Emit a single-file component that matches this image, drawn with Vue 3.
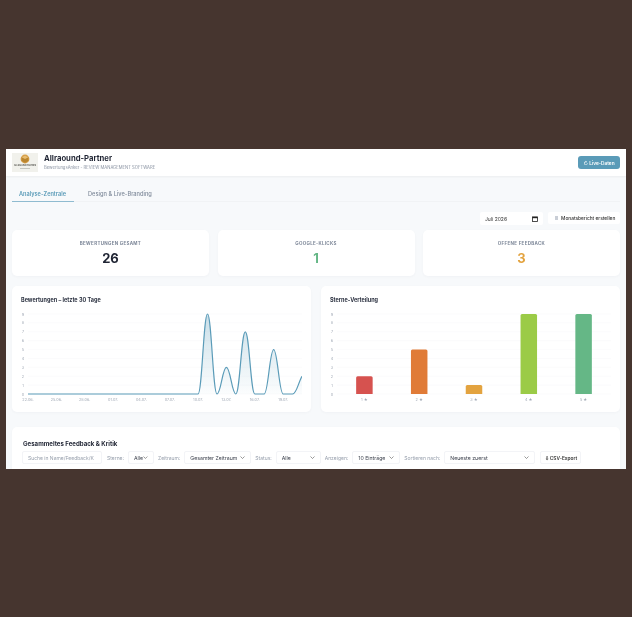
<script setup>
import { computed } from 'vue';

const stats = [
  { label: 'BEWERTUNGEN GESAMT', value: 26, color: '#1f2433' },
  { label: 'GOOGLE-KLICKS', value: 1, color: '#65b786' },
  { label: 'OFFENE FEEDBACK', value: 3, color: '#e3a33f' },
];

const days = [0, 0, 0, 0, 0, 0, 0, 0, 0, 0, 0, 0, 0, 0, 0, 0, 0, 0, 0, 9, 0, 3, 0, 7, 0, 0, 5, 0, 0, 2];
const dayLabels = ['22.06.', '25.06.', '28.06.', '01.07.', '04.07.', '07.07.', '10.07.', '13.07.', '16.07.', '19.07.'];
const stars = [
  { label: '1 ★', value: 2, color: '#d6524f' },
  { label: '2 ★', value: 5, color: '#e07b37' },
  { label: '3 ★', value: 1, color: '#e3a33f' },
  { label: '4 ★', value: 9, color: '#9bcb47' },
  { label: '5 ★', value: 9, color: '#65b786' },
];

const plot = { left: 7, right: 281, top: 5, bottom: 85 };
const ticks = [0, 1, 2, 3, 4, 5, 6, 7, 8, 9];
const yOf = (v) => plot.bottom - (v / 9) * (plot.bottom - plot.top);
const dayStep = (plot.right - plot.left) / (days.length - 1);
const xOf = (i) => plot.left + i * dayStep;

// spline with a flat tangent at every point, so peaks and valleys stay round;
// the last point has nothing after it, so the line is still rising there
const linePath = computed(() => {
  const pts = days.map((v, i) => ({ x: xOf(i), y: yOf(v) }));
  const pull = dayStep * 0.42;
  let d = `M${pts[0].x} ${pts[0].y}`;
  for (let i = 0; i < pts.length - 1; i++) {
    const a = pts[i];
    const b = pts[i + 1];
    const endY = i === pts.length - 2 ? b.y + (a.y - b.y) * 0.4 : b.y;
    d += ` C${(a.x + pull).toFixed(2)} ${a.y.toFixed(2)} ${(b.x - pull).toFixed(2)} ${endY.toFixed(2)} ${b.x.toFixed(2)} ${b.y.toFixed(2)}`;
  }
  return d;
});
const areaPath = computed(() => `${linePath.value} L${plot.right} ${plot.bottom} L${plot.left} ${plot.bottom} Z`);

const barSlot = (plot.right - plot.left) / stars.length;
const barWidth = 16.5;
const barX = (i) => plot.left + barSlot * i + (barSlot - barWidth) / 2;
</script>

<template>
  <div class="stage">
    <div class="frame">
      <header class="topbar">
        <div class="brand">
          <div class="logo">
            <svg width="26" height="19" viewBox="0 0 26 19">
              <circle cx="13" cy="6" r="4.4" fill="#d9a04a" />
              <path d="M13 2.4l3.4 1.8v3.8L13 9.8 9.6 8V4.2z" fill="#b9852f" />
              <path d="M9.6 4.2L13 6l3.4-1.8L13 2.4z" fill="#e8bd72" />
              <text x="13" y="13.2" text-anchor="middle" class="logo-text">ALLRAOUND PARTNER</text>
              <rect x="8" y="15" width="10" height="0.6" fill="#a8a8a0" />
            </svg>
          </div>
          <div class="brand-text">
            <div class="brand-name">Allraound-Partner</div>
            <div class="brand-sub">BewertungsAnker - REVIEW MANAGEMENT SOFTWARE</div>
          </div>
        </div>
        <button class="live-btn">↻ Live-Daten</button>
      </header>

      <main class="content">
        <nav class="tabs">
          <span class="tab active">Analyse-Zentrale</span>
          <span class="tab">Design &amp; Live-Branding</span>
        </nav>

        <div class="toolbar">
          <div class="month">
            <span>Juli 2026</span>
            <svg width="6" height="6" viewBox="0 0 6 6">
              <rect x="0.5" y="0.9" width="5" height="4.6" fill="none" stroke="#222" stroke-width="0.8" />
              <rect x="0.5" y="0.9" width="5" height="1.3" fill="#222" />
            </svg>
          </div>
          <button class="report-btn"><i class="doc"></i>Monatsbericht erstellen</button>
        </div>

        <section class="stats">
          <div v-for="s in stats" :key="s.label" class="card stat">
            <div class="stat-label">{{ s.label }}</div>
            <div class="stat-value" :style="{ color: s.color }">{{ s.value }}</div>
          </div>
        </section>

        <section class="charts">
          <div class="card chart">
            <h3>Bewertungen – letzte 30 Tage</h3>
            <svg width="281" height="96" viewBox="0 0 281 96">
              <defs>
                <linearGradient id="areaFill" x1="0" y1="0" x2="0" y2="1">
                  <stop offset="0" stop-color="#5a9bb8" stop-opacity="0.32" />
                  <stop offset="1" stop-color="#5a9bb8" stop-opacity="0.02" />
                </linearGradient>
              </defs>
              <line v-for="t in ticks" :key="t" :x1="plot.left" :x2="plot.right" :y1="yOf(t)" :y2="yOf(t)" class="grid" />
              <text v-for="t in ticks" :key="'y' + t" x="2" :y="yOf(t) + 1.5" class="axis" text-anchor="middle">{{ t }}</text>
              <path :d="areaPath" fill="url(#areaFill)" />
              <path :d="linePath" fill="none" stroke="#5a9bb8" stroke-width="1.2" />
              <text v-for="(l, i) in dayLabels" :key="l" :x="xOf(i * 3)" y="92" class="axis" text-anchor="middle">{{ l }}</text>
            </svg>
          </div>
          <div class="card chart">
            <h3>Sterne-Verteilung</h3>
            <svg width="281" height="96" viewBox="0 0 281 96">
              <line v-for="t in ticks" :key="t" :x1="plot.left" :x2="plot.right" :y1="yOf(t)" :y2="yOf(t)" class="grid" />
              <text v-for="t in ticks" :key="'y' + t" x="2" :y="yOf(t) + 1.5" class="axis" text-anchor="middle">{{ t }}</text>
              <g v-for="(b, i) in stars" :key="b.label">
                <path
                  :d="`M${barX(i)} ${plot.bottom}V${yOf(b.value) + 1.5}q0 -1.5 1.5 -1.5h${barWidth - 3}q1.5 0 1.5 1.5V${plot.bottom}z`"
                  :fill="b.color"
                />
                <text :x="barX(i) + barWidth / 2" y="92" class="axis" text-anchor="middle">{{ b.label }}</text>
              </g>
            </svg>
          </div>
        </section>

        <section class="card feedback">
          <h3>Gesammeltes Feedback &amp; Kritik</h3>
          <div class="filters">
            <div class="field search">Suche in Name/Feedback/K</div>
            <span class="flabel">Sterne:</span>
            <div class="field sel w-stars"><span>Alle</span><svg width="5" height="3" viewBox="0 0 5 3"><path d="M.5.5l2 2 2-2" fill="none" stroke="#555" stroke-width=".6" /></svg></div>
            <span class="flabel">Zeitraum:</span>
            <div class="field sel w-range"><span>Gesamter Zeitraum</span><svg width="5" height="3" viewBox="0 0 5 3"><path d="M.5.5l2 2 2-2" fill="none" stroke="#555" stroke-width=".6" /></svg></div>
            <span class="flabel">Status:</span>
            <div class="field sel w-status"><span>Alle</span><svg width="5" height="3" viewBox="0 0 5 3"><path d="M.5.5l2 2 2-2" fill="none" stroke="#555" stroke-width=".6" /></svg></div>
            <span class="flabel">Anzeigen:</span>
            <div class="field sel w-count"><span>10 Einträge</span><svg width="5" height="3" viewBox="0 0 5 3"><path d="M.5.5l2 2 2-2" fill="none" stroke="#555" stroke-width=".6" /></svg></div>
            <span class="flabel">Sortieren nach:</span>
            <div class="field sel w-sort"><span>Neueste zuerst</span><svg width="5" height="3" viewBox="0 0 5 3"><path d="M.5.5l2 2 2-2" fill="none" stroke="#555" stroke-width=".6" /></svg></div>
            <button class="csv">⇩ CSV-Export</button>
          </div>
        </section>
      </main>
    </div>
  </div>
</template>

<style>
html, body { margin: 0; background: #46352f; }
</style>

<style scoped>
* { box-sizing: border-box; }

.stage {
  height: 617px;
  padding: 149px 6px 0;
  background: #46352f;
  font-family: Inter, "Open Sans", sans-serif;
  color: #1f2433;
  overflow: hidden;
}

/* the source is a downscaled capture, so everything in it is slightly soft */
.frame {
  width: 620px;
  height: 320px;
  background: #f7f9fb;
  overflow: hidden;
  display: flex;
  flex-direction: column;
  filter: blur(0.3px);
}

.topbar {
  height: 27px;
  flex: none;
  background: #fff;
  padding: 0 6px;
  display: flex;
  align-items: center;
  justify-content: space-between;
  box-shadow: 0 1px 2px rgba(0, 0, 0, 0.05);
}

.brand { display: flex; align-items: center; gap: 6px; }

.logo {
  width: 26px;
  height: 19px;
  background: #f1f1ec;
  display: flex;
}

.logo-text { font-size: 2px; font-weight: 700; fill: #55554f; }

.brand-name { font-size: 7.7px; font-weight: 700; line-height: 10px; color: #1f2433; }
.brand-sub { font-size: 4.2px; line-height: 6px; color: #8b94a3; margin-top: 1px; }

.live-btn {
  width: 42px;
  height: 13px;
  padding: 0;
  border: none;
  border-radius: 3px;
  background: #5a9bb8;
  color: #fff;
  font: 600 4.8px Inter, sans-serif;
}

.content { padding: 0 6px; flex: 1; }

.tabs {
  display: flex;
  gap: 7px;
  height: 26px;
  padding-top: 13px;
  border-bottom: 1px solid #f1f3f5;
}

.tab {
  padding: 0 7px;
  height: 13px;
  font-size: 5.7px;
  font-weight: 500;
  line-height: 10px;
  color: #7f8a9a;
  white-space: nowrap;
}

.tab.active {
  width: 62px;
  color: #5a9bb8;
  font-weight: 600;
  font-size: 5.6px;
  border-bottom: 1.5px solid #8fbbd0;
}

.toolbar {
  display: flex;
  justify-content: flex-end;
  gap: 5px;
  margin-top: 10px;
  height: 13px;
}

.month {
  width: 63px;
  height: 13px;
  background: #fff;
  border-radius: 2px;
  padding: 0 5px 0 5px;
  display: flex;
  align-items: center;
  justify-content: space-between;
  font-size: 5px;
  color: #333;
}

.report-btn {
  width: 72px;
  height: 12px;
  padding: 0 0 0 7px;
  border: none;
  border-radius: 2px;
  background: #fff;
  display: flex;
  align-items: center;
  gap: 3px;
  font: 500 4.8px Inter, sans-serif;
  color: #333;
  white-space: nowrap;
}

.doc { width: 3px; height: 4px; background: #c9ced6; flex: none; }

.card {
  background: #fff;
  border-radius: 5px;
  box-shadow: 0 1px 3px rgba(30, 40, 60, 0.03);
}

.stats {
  display: grid;
  grid-template-columns: repeat(3, 1fr);
  gap: 8.5px;
  margin-top: 5px;
}

.stat {
  height: 46px;
  text-align: center;
  padding-top: 11px;
}

.stat-label {
  font-size: 4.5px;
  font-weight: 700;
  letter-spacing: 0.3px;
  line-height: 6px;
  color: #7d8798;
}

.stat-value {
  font-size: 13px;
  font-weight: 700;
  line-height: 16px;
  margin-top: 3px;
}

.charts {
  display: grid;
  grid-template-columns: repeat(2, 1fr);
  gap: 10px;
  margin-top: 10px;
}

.chart {
  height: 126px;
  padding: 10px 9px 0;
}

.chart h3,
.feedback h3 {
  margin: 0;
  font-size: 5.5px;
  font-weight: 700;
  line-height: 8px;
  color: #2d3342;
}

.chart svg { display: block; margin-top: 5px; }

.grid { stroke: #f8f9fa; stroke-width: 0.6; }
.axis { font-size: 3.8px; fill: #a3abb7; }

.feedback {
  margin-top: 15px;
  padding: 13px 10px 0;
  height: 60px;
}

.feedback h3 { font-size: 6.1px; color: #1f2433; margin-left: 1px; }

.filters {
  display: flex;
  align-items: center;
  gap: 4px;
  margin-top: 3px;
  height: 13px;
  white-space: nowrap;
}

.field {
  height: 13px;
  border: 0.5px solid #f3f4f7;
  border-radius: 2px;
  background: #fff;
  padding: 0 5px;
  display: flex;
  align-items: center;
  font-size: 5.2px;
  color: #3a3f4b;
}

.search { width: 80px; color: #98a0ad; font-size: 5px; margin-right: 1px; }
.sel { justify-content: space-between; }
.w-stars { width: 26px; }
.w-range { width: 67px; }
.w-status { width: 45px; }
.w-count { width: 48px; }
.w-sort { width: 91px; }

.flabel { font-size: 5px; color: #98a0ad; }

.csv {
  width: 41px;
  height: 13px;
  padding: 0;
  border: 0.5px solid #f3f4f7;
  border-radius: 2px;
  background: #fff;
  font: 600 4.8px Inter, sans-serif;
  color: #333;
  margin-left: 1px;
}
</style>
